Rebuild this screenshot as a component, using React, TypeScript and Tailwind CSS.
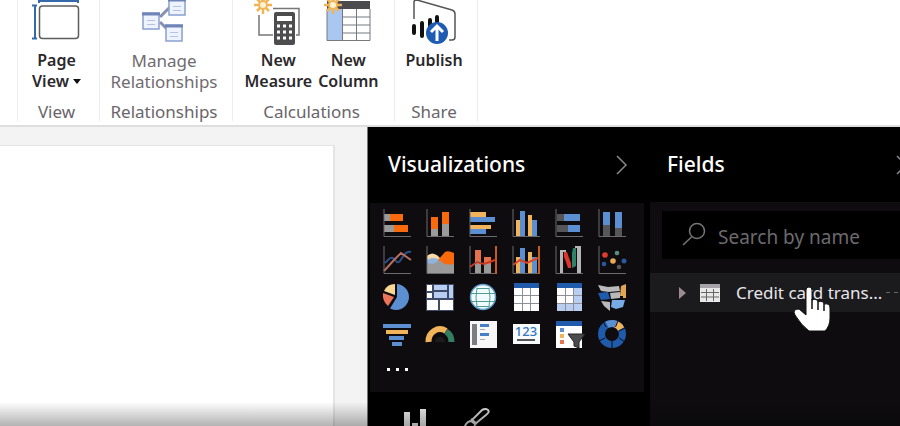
import type { ReactNode } from "react";

const ORANGE = "#f96a0c";
const GRAY = "#9a9a9a";
const DARK = "#565658";
const BLUE = "#5b8fd2";
const NAVY = "#1f5aab";
const YELLOW = "#f2b45a";

function Axis() {
  return <path d="M1 0V27.5H28" fill="none" stroke="#6b6b6d" strokeWidth="1" />;
}

function Grid({ shaded }: { shaded?: boolean }) {
  return (
    <>
      <rect x="2" width="25" height="28" fill="#fff" />
      {shaded && <path d="M18 5h9v23H2v-8h16z" fill="#b9cdf0" />}
      <rect x="2" width="25" height="5" fill={NAVY} />
      <path d="M2 12.5H27M2 20.5H27M10.5 5V28M18.5 5V28" stroke="#8c8f96" />
    </>
  );
}

const visuals: { name: string; art: ReactNode }[] = [
  {
    name: "Stacked bar chart",
    art: (
      <>
        <path d="M1 5h6v7H1zM1 16h10v7H1z" fill={GRAY} />
        <path d="M7 5h13v7H7zM11 16h14v7H11z" fill={ORANGE} />
        <Axis />
      </>
    ),
  },
  {
    name: "Stacked column chart",
    art: (
      <>
        <path d="M5 20h7v7H5zM16 15h7v12h-7z" fill={GRAY} />
        <path d="M5 8h7v12H5zM16 3h7v12h-7z" fill={ORANGE} />
        <Axis />
      </>
    ),
  },
  {
    name: "Clustered bar chart",
    art: (
      <>
        <path d="M1 3h16v5H1zM1 16h21v4H1z" fill={YELLOW} />
        <path d="M1 8h25v5H1zM1 20h16v5H1z" fill={BLUE} />
        <Axis />
      </>
    ),
  },
  {
    name: "Clustered column chart",
    art: (
      <>
        <path d="M4 11h4v16H4zM16 6h4v21h-4z" fill={YELLOW} />
        <path d="M8 2h5v25H8zM20 11h5v16h-5z" fill={BLUE} />
        <Axis />
      </>
    ),
  },
  {
    name: "100% stacked bar chart",
    art: (
      <>
        <path d="M2 5h7v7H2zM2 16h11v7H2z" fill={DARK} />
        <path d="M9 5h16v7H9zM13 16h12v7H13z" fill={BLUE} />
        <Axis />
      </>
    ),
  },
  {
    name: "100% stacked column chart",
    art: (
      <>
        <path d="M5 16h7v11H5zM17 19h7v8h-7z" fill={DARK} />
        <path d="M5 3h7v13H5zM17 3h7v16h-7z" fill={BLUE} />
        <Axis />
      </>
    ),
  },
  {
    name: "Line chart",
    art: (
      <>
        <path d="M2 17L6 13Q9 10 12 14T17 15L21 9Q24 5 28 6" fill="none" stroke="#2c4f86" strokeWidth="2" />
        <path d="M1 25L11 14L18 7L28 14" fill="none" stroke="#b5705f" strokeWidth="2" />
        <Axis />
      </>
    ),
  },
  {
    name: "Area chart",
    art: (
      <>
        <path d="M1 10Q7 4 14 12L20 16V27H1z" fill="#f7d9a8" />
        <path d="M1 14Q7 10 14 14V27H1z" fill="#8fb4dd" />
        <path d="M12 14L19 6Q22 4 28 7V27H12z" fill={ORANGE} />
        <path d="M1 17L7 18L14 14Q18 20 28 18V27H1z" fill={GRAY} />
        <Axis />
      </>
    ),
  },
  {
    name: "Line and stacked column chart",
    art: (
      <>
        <path d="M6 15h6v12H6zM15 18h7v9h-7z" fill={GRAY} />
        <path d="M6 4h6v11H6zM15 11h7v7h-7z" fill="#e8714d" />
        <path d="M1 21L8 16L15 18L26 14" fill="none" stroke="#c93a22" strokeWidth="2" />
        <Axis />
        <path d="M27 0V28" stroke="#c35e1d" strokeWidth="2" />
      </>
    ),
  },
  {
    name: "Line and clustered column chart",
    art: (
      <>
        <path d="M4 11h4v16H4zM16 6h4v21h-4z" fill={YELLOW} />
        <path d="M8 2h5v25H8zM20 11h5v16h-5z" fill={BLUE} />
        <path d="M1 19L8 14L15 17L26 12" fill="none" stroke="#d8432a" strokeWidth="2" />
        <Axis />
        <path d="M27 0V28" stroke="#c35e1d" strokeWidth="2" />
      </>
    ),
  },
  {
    name: "Waterfall chart",
    art: (
      <>
        <path d="M5 6h3v21H5zM22 2h4v25h-4z" fill="#b5b5b7" />
        <path d="M5 5H11M20 1H26" stroke="#b5b5b7" strokeWidth="2" />
        <path d="M9 6h3l2 6l2 5v5h-3l-2-6l-2-5z" fill="#e0352b" />
        <path d="M18 2h3v18l-4 2V7z" fill="#2f8168" />
        <Axis />
      </>
    ),
  },
  {
    name: "Scatter chart",
    art: (
      <>
        <circle cx="7" cy="9" r="2.8" fill="#e03b2d" />
        <circle cx="19" cy="7" r="2.3" fill="#5a8d82" />
        <circle cx="15" cy="15" r="2.8" fill="#e9aa55" />
        <circle cx="6" cy="18" r="2.3" fill="#28599d" />
        <circle cx="26" cy="15" r="2.5" fill="#28599d" />
        <circle cx="21" cy="21" r="2.3" fill="#57575a" />
        <Axis />
      </>
    ),
  },
  {
    name: "Pie chart",
    art: (
      <>
        <path d="M14 14V1A13 13 0 1 1 7 25.500z" fill={BLUE} />
        <path d="M11 14L5 23Q-1 18 0 10z" fill="#ed7459" />
        <path d="M12 12L1 8Q4 1 12 1z" fill="#fad695" />
      </>
    ),
  },
  {
    name: "Treemap",
    art: (
      <>
        <rect y="1" width="28" height="27" fill="#3f4a66" />
        <path d="M1 2h5v6H1zM1 10h5v5H1zM1 17h11v10H1zM14 17h13v10H14z" fill="#fff" />
        <path d="M8 2h13v5H8zM8 9h13v6H8zM23 2h4v13h-4z" fill="#b8cdf2" />
      </>
    ),
  },
  {
    name: "Map",
    art: (
      <>
        <circle cx="14" cy="14" r="12.500" fill="#f1fafc" stroke="#5fa0cf" strokeWidth="1.500" />
        <path d="M2 10.500H26M2 18.500H26M8 5.500H20M8 23.500H20" stroke="#4f9d90" />
        <path d="M8 5Q6 14 8 24M20 5Q22 14 20 24" fill="none" stroke="#4f9d90" />
      </>
    ),
  },
  { name: "Table", art: <Grid /> },
  { name: "Matrix", art: <Grid shaded /> },
  {
    name: "Filled map",
    art: (
      <>
        <path d="M0 2L10 4L21 3L22 8L11 9L3 8zM12 10l10-1v6l-9 1zM3 18l9 1v9l-6-5z" fill="#b9b9bb" />
        <path d="M0 10L10 9L12 16L3 17z" fill={NAVY} />
        <path d="M14 17L27 17L25 24L18 26L13 24z" fill="#76abe5" />
        <path d="M23 3L28 1V15H25V13L22 13z" fill="#e2a554" />
      </>
    ),
  },
  {
    name: "Funnel",
    art: (
      <>
        <path d="M0 4h28v4H0zM6 16h15v4H6zM9 22h10v4H9z" fill={BLUE} />
        <path d="M3 10h22v4H3z" fill={YELLOW} />
      </>
    ),
  },
  {
    name: "Gauge",
    art: (
      <>
        <path d="M2.500 22A11.500 12 0 0 1 20 11" fill="none" stroke={YELLOW} strokeWidth="6" />
        <path d="M20 11.500A11.500 12 0 0 1 25.500 22" fill="none" stroke="#347e63" strokeWidth="6" />
        <path d="M9 22A5 5 0 0 1 19 22" fill="#1c1c1d" />
      </>
    ),
  },
  {
    name: "Multi-row card",
    art: (
      <>
        <rect x="1" y="1" width="27" height="27" fill="#f7f7f8" />
        <path d="M3 4h5v21H3z" fill="#7d7c80" />
        <path d="M11 4h9v3h-9zM11 13h9v3h-9z" fill="#477ec5" />
        <path d="M11 9.500h5M11 19.500h5" stroke="#aaa" />
      </>
    ),
  },
  {
    name: "Card",
    art: (
      <>
        <rect x="1" y="4" width="27" height="20" fill="#f8fafc" />
        <text x="14" y="16" textAnchor="middle" fill="#3376bd" fontSize="13" fontWeight="500" className="font-['Noto_Sans',sans-serif]">
          123
        </text>
        <path d="M5 20H23" stroke="#555" strokeWidth="2" />
      </>
    ),
  },
  {
    name: "Slicer",
    art: (
      <>
        <rect x="1" y="1" width="26" height="27" fill="#fff" />
        <rect x="1" y="1" width="26" height="5" fill={NAVY} />
        <path d="M5 8h4v4H5z" fill={BLUE} />
        <path d="M5 14h4v4H5z" fill={YELLOW} />
        <path d="M5 20h4v4H5z" fill="#e87551" />
        <path d="M13 14H30L24 22V28L19 26V22z" fill="#4c4c4f" stroke="#222" />
      </>
    ),
  },
  {
    name: "Donut chart",
    art: (
      <>
        <circle cx="14" cy="14" r="10.500" fill="none" stroke={NAVY} strokeWidth="7" />
        <path d="M9 4.700A10.500 10.500 0 0 1 18 4.300" fill="none" stroke={BLUE} strokeWidth="7" />
        <path d="M18 4.300A10.500 10.500 0 0 1 23 9" fill="none" stroke={YELLOW} strokeWidth="7" />
        <path d="M8 7L5 1M17.500 7L20 1M21 11L27 8M7 18L1 21M14 21V28M21 18L27 22" stroke="#0e0c0f" />
      </>
    ),
  },
];

function Spark() {
  return (
    <g stroke="#f0b557" strokeWidth="2.500">
      <path d="M9 -4V14M0 5H18M3 -1L15 11M3 11L15 -1" />
      <circle cx="9" cy="5" r="4" fill="#fff2d2" strokeWidth="2" />
    </g>
  );
}

function PageViewIcon() {
  return (
    <svg width="48" height="46" viewBox="0 0 48 46" fill="none" aria-hidden="true">
      <path d="M7 1H46M7 0V3M46 0V3M3 5V39M0 5.500H5M0 38.500H5" stroke="#3569ab" strokeWidth="2" />
      <rect x="7.500" y="6" width="39" height="32.500" rx="3" stroke="#5d5d5d" strokeWidth="1.500" />
    </svg>
  );
}

function RelationshipsIcon() {
  return (
    <svg width="48" height="46" viewBox="0 0 48 46" fill="none" aria-hidden="true">
      <path d="M20 17L30 7M20 22L28 30" stroke="#8790b3" strokeWidth="3" />
      {["translate(2 12)", "translate(28 -2)", "translate(25 24)"].map((place) => (
        <g key={place} transform={place}>
          <rect x="1" y="1" width="16" height="16" fill="#eef3ff" stroke="#8ba0cf" strokeWidth="1.500" />
          <path d="M0 2H18" stroke="#7184b8" strokeWidth="3" />
          <path d="M5 8.500H13M5 12.500H13" stroke="#b4c4e8" />
        </g>
      ))}
    </svg>
  );
}

function MeasureIcon() {
  return (
    <svg width="48" height="46" viewBox="0 0 48 46" fill="none" aria-hidden="true">
      <path d="M5 15V35H19M19 8.500H45V35H42" stroke="#77777a" strokeWidth="1.500" />
      <rect x="20" y="12" width="21" height="33" rx="2" fill="#4d4d50" />
      <rect x="23" y="16" width="15" height="5" fill="#fff" />
      <path d="M23 26H38M23 32H38M23 38H38" stroke="#fff" strokeWidth="3" strokeDasharray="3 3" />
      <Spark />
    </svg>
  );
}

function ColumnIcon() {
  return (
    <svg width="48" height="46" viewBox="0 0 48 46" fill="none" aria-hidden="true">
      <rect x="3" y="2" width="43" height="39" fill="#fff" />
      <rect x="3" y="9" width="15" height="32" fill="#aac7f2" />
      <rect x="3" y="1" width="43" height="8" fill="#4c4c4f" />
      <path d="M3 9V40.500H46V9M18.500 9V41M32.500 9V41M18 17H46M18 25H46M18 33H46" stroke="#77797e" />
      <Spark />
    </svg>
  );
}

function PublishIcon() {
  return (
    <svg width="48" height="46" viewBox="0 0 48 46" fill="none" aria-hidden="true">
      <path d="M4 19V2Q4 0 7 0L42 10Q45 11 45 14V37Q45 40 42 40H39" stroke="#555" strokeWidth="1.500" />
      <path d="M4 26V33M12 23V36M20 20V36M27 17V24" stroke="#111" strokeWidth="4" strokeLinecap="round" />
      <circle cx="27" cy="33" r="11" fill="#1e5bb2" />
      <path d="M27 41V27M21 32L27 26L33 32" stroke="#fff" strokeWidth="3" />
    </svg>
  );
}

function Command({ icon, lines, muted, menu }: { icon: ReactNode; lines: string[]; muted?: boolean; menu?: boolean }) {
  return (
    <button type="button" className={`flex flex-col items-center ${muted ? "text-[17px] text-[#706b70]" : "text-base font-semibold text-[#2b282c]"}`}>
      {icon}
      <span className="mt-1 flex flex-col leading-[21px]">
        {lines.map((line, i) => (
          <span key={line} className="flex items-center justify-center gap-1">
            {line}
            {menu && i === lines.length - 1 && (
              <svg width="8" height="5" viewBox="0 0 8 5" aria-hidden="true">
                <path d="M0 0H8L4 5z" fill="#111" />
              </svg>
            )}
          </span>
        ))}
      </span>
    </button>
  );
}

function Group({ label, width, children }: { label: string; width: string; children: ReactNode }) {
  return (
    <section className={`flex shrink-0 flex-col justify-between border-r border-[#ececee] pr-1 ${width}`}>
      <div className="flex justify-center gap-1.5">{children}</div>
      <h2 className="text-center text-[17px] leading-[18px] text-[#69656a]">{label}</h2>
    </section>
  );
}

function Chevron() {
  return (
    <svg width="12" height="20" viewBox="0 0 12 20" fill="none" aria-hidden="true">
      <path d="M1 1L10 10L1 19" stroke="#88888a" strokeWidth="1.500" />
    </svg>
  );
}

export default function App() {
  return (
    <div className="relative flex h-screen flex-col overflow-hidden bg-white font-['Noto_Sans','Open_Sans',sans-serif]">
      <header className="flex h-[127px] shrink-0 border-b-2 border-[#dededf] pb-1">
        <div className="w-[18px] shrink-0 border-r border-[#ececee]" />
        <Group label="View" width="w-[82px]">
          <Command icon={<PageViewIcon />} lines={["Page", "View"]} menu />
        </Group>
        <Group label="Relationships" width="w-[133px]">
          <Command icon={<RelationshipsIcon />} lines={["Manage", "Relationships"]} muted />
        </Group>
        <Group label="Calculations" width="w-[162px]">
          <Command icon={<MeasureIcon />} lines={["New", "Measure"]} />
          <Command icon={<ColumnIcon />} lines={["New", "Column"]} />
        </Group>
        <Group label="Share" width="w-[83px]">
          <Command icon={<PublishIcon />} lines={["Publish"]} />
        </Group>
      </header>

      <div className="flex min-h-0 flex-1">
        <main className="flex min-w-0 flex-1 bg-[#f3f3f3] pt-[18px] pr-8">
          <div className="flex-1 border-t border-r-2 border-[#e4e4e5] bg-white" />
        </main>

        <aside className="w-[283px] shrink-0 overflow-hidden border-l border-[#777] bg-black">
          <div className="flex h-[76px] items-center justify-between pr-[22px] pl-5 text-white">
            <h2 className="text-[21px] font-medium">Visualizations</h2>
            <button type="button" aria-label="Collapse visualizations">
              <Chevron />
            </button>
          </div>
          <div className="mr-1.5 ml-0.5 flex h-[189px] flex-col bg-[#0e0c0f] pt-1.5 pl-[13px]">
            <div className="grid grid-cols-[repeat(6,28px)] gap-x-[15px] gap-y-[9px]">
              {visuals.map(({ name, art }) => (
                <button type="button" key={name} aria-label={name}>
                  <svg width="28" height="28" viewBox="0 0 28 28" className="overflow-visible" aria-hidden="true">
                    {art}
                  </svg>
                </button>
              ))}
            </div>
            <button type="button" aria-label="More visuals" className="mt-5 flex w-7 justify-center gap-1.5">
              <span className="size-[3px] bg-white" />
              <span className="size-[3px] bg-white" />
              <span className="size-[3px] bg-white" />
            </button>
          </div>
          <div className="flex gap-8 pt-4 pl-9">
            <button type="button" aria-label="Fields">
              <svg width="24" height="28" viewBox="0 0 24 28" aria-hidden="true">
                <path d="M0 4h6v24H0zM8 15h6v13H8zM16 1h6v27h-6z" fill="#ededed" />
              </svg>
            </button>
            <button type="button" aria-label="Format">
              <svg width="30" height="28" viewBox="0 0 30 28" fill="none" stroke="#dadada" strokeWidth="2" aria-hidden="true">
                <path d="M11 13L22 2Q26 0 28 2T26 7L15 16zM11 11L17 16M12 13Q7 13 5 18Q4 23 0 24Q12 27 15 17" />
              </svg>
            </button>
          </div>
        </aside>

        <aside className="w-[250px] shrink-0 overflow-hidden bg-black">
          <div className="flex h-[75px] w-[258px] items-center justify-between pl-[17px] text-white">
            <h2 className="text-[21px] font-medium">Fields</h2>
            <button type="button" aria-label="Collapse fields">
              <Chevron />
            </button>
          </div>
          <div className="h-full bg-[#0e0c0f] pt-[9px]">
            <label className="ml-3 flex h-12 items-center gap-3 bg-black pl-5">
              <svg width="24" height="26" viewBox="0 0 24 26" fill="none" stroke="#777579" strokeWidth="1.500" aria-hidden="true">
                <circle cx="15" cy="9" r="7.500" />
                <path d="M9.500 15L1 23" />
              </svg>
              <input type="text" aria-label="Search fields" placeholder="Search by name" className="min-w-0 flex-1 bg-transparent pt-1 text-[19px] text-white outline-none placeholder:text-[#6c6a6e]" />
            </label>
            <button type="button" className="mt-3.5 flex h-[39px] w-[258px] items-center bg-[#1b1a1d] pl-7 text-[#e8e6ea]">
              <svg width="10" height="14" viewBox="0 0 10 14" aria-hidden="true">
                <path d="M1 1L8 7L1 13z" fill="#9b8c94" />
              </svg>
              <svg className="ml-3 shrink-0" width="20" height="20" viewBox="0 0 20 20" aria-hidden="true">
                <path d="M0 1H20V19H0z" fill="#e8e8e8" />
                <path d="M0 1H20V5H0z" fill="#a6a4a8" />
                <path d="M1 9.500H19M1 14H19M6.500 6V18M13.500 6V18" stroke="#666" />
              </svg>
              <span className="ml-4 text-[17px] whitespace-nowrap">Credit card trans...</span>
              <span className="ml-1 flex gap-1">
                <span className="h-px w-1 bg-[#666]" />
                <span className="h-px w-1 bg-[#666]" />
              </span>
            </button>
          </div>
        </aside>
      </div>

      <svg className="pointer-events-none absolute top-[286px] left-[793px]" width="38" height="48" viewBox="0 0 38 48" aria-hidden="true">
        <path d="M13 4Q13 1 16 1T19 4V14Q24 12 25 16Q30 14 31 18Q37 17 37 22V32Q37 40 32 45H16Q8 39 2 29Q-1 23 6 23L13 29z" fill="#fff" stroke="#111" />
        <path d="M19 13V23M25 16V24M31 18V25" stroke="#111" strokeWidth="1.500" />
      </svg>
      <div className="pointer-events-none absolute inset-x-0 bottom-0 h-6 bg-linear-to-b from-transparent to-black/30" />
    </div>
  );
}
